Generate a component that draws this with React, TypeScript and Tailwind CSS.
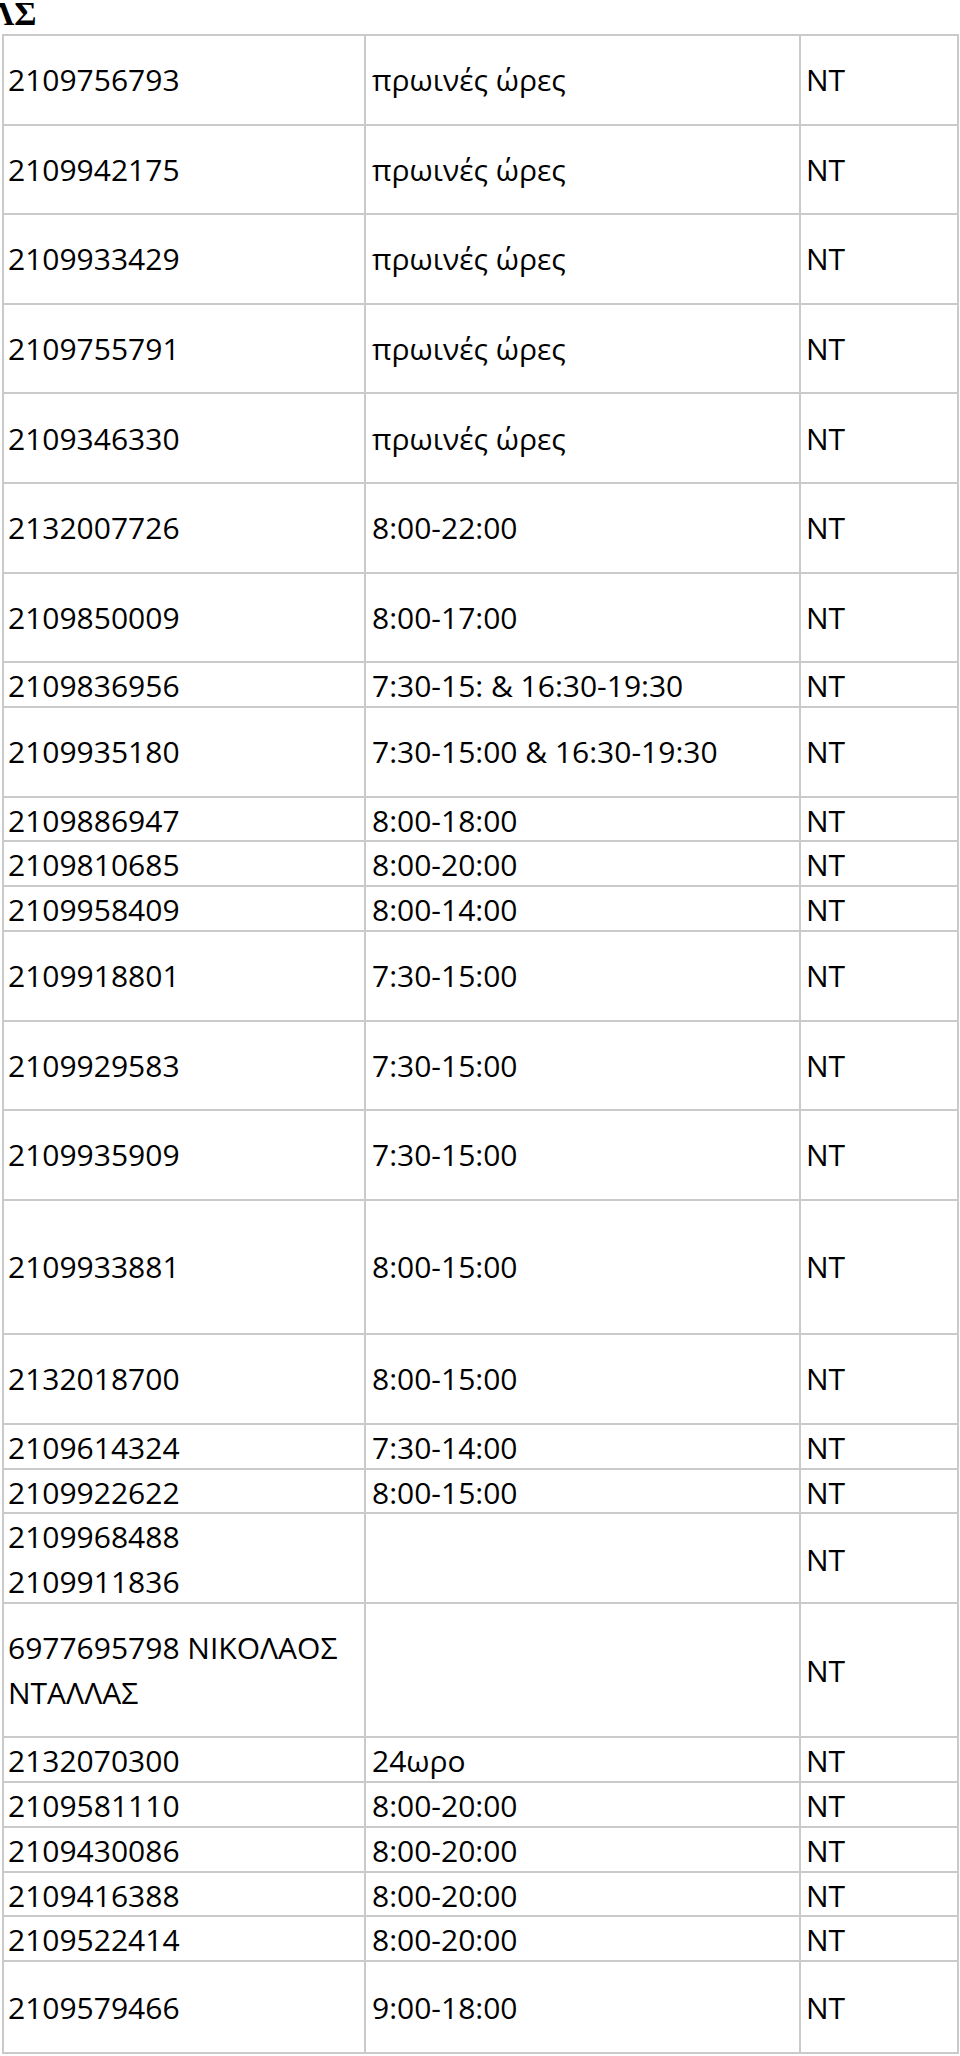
import React from 'react'

type Row = {
  phone: string[];
  hours: string;
  units: 1 | 2 | 3;
};

const rows: Row[] = [
  { phone: ['2109756793'], hours: 'πρωινές ώρες', units: 2 },
  { phone: ['2109942175'], hours: 'πρωινές ώρες', units: 2 },
  { phone: ['2109933429'], hours: 'πρωινές ώρες', units: 2 },
  { phone: ['2109755791'], hours: 'πρωινές ώρες', units: 2 },
  { phone: ['2109346330'], hours: 'πρωινές ώρες', units: 2 },
  { phone: ['2132007726'], hours: '8:00-22:00', units: 2 },
  { phone: ['2109850009'], hours: '8:00-17:00', units: 2 },
  { phone: ['2109836956'], hours: '7:30-15: & 16:30-19:30', units: 1 },
  { phone: ['2109935180'], hours: '7:30-15:00 & 16:30-19:30', units: 2 },
  { phone: ['2109886947'], hours: '8:00-18:00', units: 1 },
  { phone: ['2109810685'], hours: '8:00-20:00', units: 1 },
  { phone: ['2109958409'], hours: '8:00-14:00', units: 1 },
  { phone: ['2109918801'], hours: '7:30-15:00', units: 2 },
  { phone: ['2109929583'], hours: '7:30-15:00', units: 2 },
  { phone: ['2109935909'], hours: '7:30-15:00', units: 2 },
  { phone: ['2109933881'], hours: '8:00-15:00', units: 3 },
  { phone: ['2132018700'], hours: '8:00-15:00', units: 2 },
  { phone: ['2109614324'], hours: '7:30-14:00', units: 1 },
  { phone: ['2109922622'], hours: '8:00-15:00', units: 1 },
  { phone: ['2109968488', '2109911836'], hours: '', units: 2 },
  { phone: ['6977695798 ΝΙΚΟΛΑΟΣ ΝΤΑΛΛΑΣ'], hours: '', units: 3 },
  { phone: ['2132070300'], hours: '24ωρο', units: 1 },
  { phone: ['2109581110'], hours: '8:00-20:00', units: 1 },
  { phone: ['2109430086'], hours: '8:00-20:00', units: 1 },
  { phone: ['2109416388'], hours: '8:00-20:00', units: 1 },
  { phone: ['2109522414'], hours: '8:00-20:00', units: 1 },
  { phone: ['2109579466'], hours: '9:00-18:00', units: 2 },
];

// row heights in multiples of one text line
const rowHeight = {
  1: 'h-[44.8px]',
  2: 'h-[89.6px]',
  3: 'h-[134.4px]',
};

const App: React.FC = () => {
  return (
    <div className="min-h-screen bg-white text-black overflow-hidden">
      <div className="h-[34px] -ml-[10px] font-['Liberation_Serif',serif] font-bold text-[34px] leading-[28px]">
        ΛΣ
      </div>

      <div className="ml-[2px] w-[957px] border-2 border-[#cacaca] divide-y-2 divide-[#cacaca] font-['Open_Sans',sans-serif] text-[30px] leading-[45px]">
        {rows.map((row, i) => (
          <div
            key={i}
            className={`grid grid-cols-[362px_435px_1fr] divide-x-2 divide-[#cacaca] ${rowHeight[row.units]}`}
          >
            <div className="flex flex-col justify-center pl-[4px]">
              {row.phone.map((p) => (
                <span key={p}>{p}</span>
              ))}
            </div>
            <div className="flex items-center pl-[6px]">{row.hours}</div>
            <div className="flex items-center pl-[5px]">NT</div>
          </div>
        ))}
      </div>
    </div>
  )
}

export default App
